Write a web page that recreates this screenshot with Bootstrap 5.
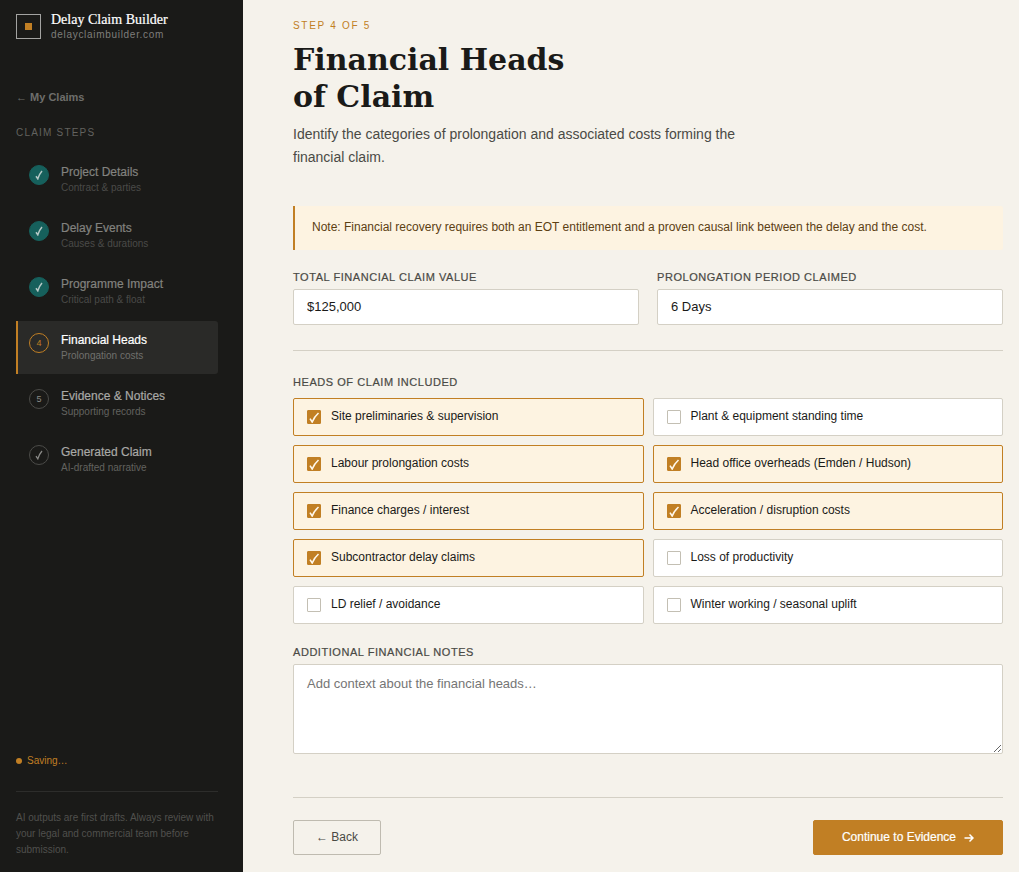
<!DOCTYPE html>
<html lang="en">
<head>
<meta charset="utf-8">
<meta name="viewport" content="width=device-width, initial-scale=1">
<title>Delay Claim Builder</title>
<link href="https://cdn.jsdelivr.net/npm/bootstrap@5.3.0/dist/css/bootstrap.min.css" rel="stylesheet">
<style>
:root { --ink:#1a1a18; --amber:#c17f24; --paper:#f5f2eb; --line:#d4d0c5; --cream:#fdf3e1; }
body { font-family:"Liberation Sans", Arial, sans-serif; font-size:12px; line-height:18px; color:var(--ink); background:var(--paper); }
.sidebar { width:243px; flex:none; background:var(--ink); padding:14px 25px 14px 16px; color:#62625f; }
.brand { gap:10px; }
.logo { width:25px; height:25px; flex:none; }
.brand-name { font:14px/12px "Liberation Serif", serif; color:#fff; -webkit-text-stroke:.2px; }
.brand-url { font-size:10px; line-height:12px; letter-spacing:.07em; color:#7e7e7b; margin-top:3px; }
.back-link { font-size:11px; line-height:16px; font-weight:bold; color:#6e6e6b; margin-top:48px; text-decoration:none; }
.side-title { font-size:10px; line-height:14px; letter-spacing:.12em; margin:21px 0 13px; color:#62625f; }
.steps { gap:3px; }
.step { border-left:2px solid transparent; border-radius:0 3px 3px 0; padding:11px; gap:12px; text-decoration:none; color:#a9a9a6; }
.step-dot { width:20px; height:20px; margin-top:1px; flex:none; border:1px solid #4b4b48; font-size:9px; color:#8a8a87; }
.step-name { line-height:16px; display:block; -webkit-text-stroke:.2px; }
.step-sub { font-size:10px; line-height:15px; display:block; color:#62625f; }
.step.done { color:#82827f; }
.step.done .step-sub { color:#4a4a48; }
.step.done .step-dot { background:#16605c; border-color:#16605c; color:#b5c8c6; }
.step.current { background:#2a2a28; border-left-color:var(--amber); color:#fff; }
.step.current .step-sub { color:#70706d; }
.step.current .step-dot { border-color:var(--amber); color:var(--amber); }
.saving { font-size:10px; line-height:14px; color:var(--amber); gap:5px; }
.saving-dot { width:6px; height:6px; background:var(--amber); }
.disclaimer { font-size:10px; line-height:16px; color:#50504d; border-top:1px solid #2d2d2b; margin-top:23px; padding-top:18px; }
main { padding:18px 16px 17px 50px; min-width:0; }
.eyebrow { font-size:10px; line-height:15px; letter-spacing:.17em; color:var(--amber); }
h1 { font:bold 30px/37px "DejaVu Serif", serif; margin:8px 0; }
.intro { font-size:14px; line-height:23px; color:#4a4a45; max-width:460px; margin-bottom:37px; }
.note { background:var(--cream); border-left:2px solid var(--amber); border-radius:0 2px 2px 0; color:#5c4013; padding:11px 17px 13px; line-height:20px; margin-bottom:19px; }
.caption { font-size:11px; line-height:16px; letter-spacing:.05em; color:#4a4a45; margin-bottom:4px; display:block; text-transform:uppercase; float:none; -webkit-text-stroke:.2px; }
.fields { display:grid; grid-template-columns:1fr 1fr; gap:18px; }
.form-control { font-size:13px; line-height:20px; padding:7px 13px; border-color:var(--line); border-radius:2px; color:var(--ink); background:#fff; }
.form-control::placeholder { color:#757575; }
.rule { border:0; border-top:1px solid var(--line); opacity:1; margin:25px 0 23px; }
.heads { display:grid; grid-template-columns:1fr 1fr; gap:9px; margin:4px 0 20px; }
.head-item { background:#fff; border:1px solid var(--line); border-radius:2px; padding:8px 12px 10px 13px; gap:10px; }
.head-item:has(:checked) { background:var(--cream); border-color:var(--amber); }
.head-item .form-check-input { width:14px; height:14px; margin:3px 0 0; flex:none; border:1px solid #c3bfb3; border-radius:1px; background-color:#fff; }
.head-item .form-check-input:checked { border-color:var(--amber); background-color:var(--amber); background-size:14px 14px; background-image:url("data:image/svg+xml,%3Csvg xmlns='http://www.w3.org/2000/svg' viewBox='0 0 14 14'%3E%3Cpath d='M3 8.6 5.2 12 Q7.500 6.500 11.500 3' fill='none' stroke='%23fff8ec' stroke-width='1.600'/%3E%3C/svg%3E"); }
textarea.form-control { line-height:22px; padding:8px 13px 14px; resize:vertical; }
.rule-foot { margin:43px 0 22px; }
.btn { font-size:12px; line-height:19px; padding:7px 22px; border-radius:2px; }
.btn-back { border-color:#bfbbb0; color:#4a4a45; }
.btn-next { background:var(--amber); border-color:var(--amber); color:#fff; padding-left:28px; padding-right:28px; gap:8px; -webkit-text-stroke:.2px; }
.btn-back:hover { border-color:var(--ink); }
.btn-next:hover { background:#a96d1b; color:#fff; }
</style>
</head>
<body>
<div class="d-flex min-vh-100">
  <aside class="sidebar d-flex flex-column">
    <div class="brand d-flex">
      <svg class="logo" viewBox="0 0 25 25" aria-hidden="true"><rect x=".5" y=".5" width="24" height="24" fill="none" stroke="#a3a3a1"/><rect x="9" y="9" width="7" height="7" fill="#c17f24"/></svg>
      <div><div class="brand-name">Delay Claim Builder</div><div class="brand-url">delayclaimbuilder.com</div></div>
    </div>
    <a href="#" class="back-link">← My Claims</a>
    <div class="side-title">CLAIM STEPS</div>
    <nav class="steps d-flex flex-column">
      <a href="#" class="step done d-flex"><span class="step-dot rounded-circle d-flex align-items-center justify-content-center"><svg width="8" height="10" viewBox="0 0 8 10"><path d="M1 6.200 2.800 8.800Q4 4.500 7 1" fill="none" stroke="currentColor" stroke-width="1.500"/></svg></span><span><span class="step-name">Project Details</span><span class="step-sub">Contract &amp; parties</span></span></a>
      <a href="#" class="step done d-flex"><span class="step-dot rounded-circle d-flex align-items-center justify-content-center"><svg width="8" height="10" viewBox="0 0 8 10"><path d="M1 6.200 2.800 8.800Q4 4.500 7 1" fill="none" stroke="currentColor" stroke-width="1.500"/></svg></span><span><span class="step-name">Delay Events</span><span class="step-sub">Causes &amp; durations</span></span></a>
      <a href="#" class="step done d-flex"><span class="step-dot rounded-circle d-flex align-items-center justify-content-center"><svg width="8" height="10" viewBox="0 0 8 10"><path d="M1 6.200 2.800 8.800Q4 4.500 7 1" fill="none" stroke="currentColor" stroke-width="1.500"/></svg></span><span><span class="step-name">Programme Impact</span><span class="step-sub">Critical path &amp; float</span></span></a>
      <a href="#" class="step current d-flex" aria-current="step"><span class="step-dot rounded-circle d-flex align-items-center justify-content-center">4</span><span><span class="step-name">Financial Heads</span><span class="step-sub">Prolongation costs</span></span></a>
      <a href="#" class="step d-flex"><span class="step-dot rounded-circle d-flex align-items-center justify-content-center">5</span><span><span class="step-name">Evidence &amp; Notices</span><span class="step-sub">Supporting records</span></span></a>
      <a href="#" class="step d-flex"><span class="step-dot rounded-circle d-flex align-items-center justify-content-center"><svg width="8" height="10" viewBox="0 0 8 10"><path d="M1 6.200 2.800 8.800Q4 4.500 7 1" fill="none" stroke="currentColor" stroke-width="1.300"/></svg></span><span><span class="step-name">Generated Claim</span><span class="step-sub">AI-drafted narrative</span></span></a>
    </nav>
    <div class="mt-auto">
      <div class="saving d-flex align-items-center"><span class="saving-dot rounded-circle"></span>Saving…</div>
      <div class="disclaimer">AI outputs are first drafts. Always review with your legal and commercial team before submission.</div>
    </div>
  </aside>
  <main class="flex-grow-1">
    <div class="eyebrow">STEP 4 OF 5</div>
    <h1>Financial Heads<br>of Claim</h1>
    <p class="intro">Identify the categories of prolongation and associated costs forming the financial claim.</p>
    <form>
      <div class="note">Note: Financial recovery requires both an EOT entitlement and a proven causal link between the delay and the cost.</div>
      <div class="fields">
        <div><label class="caption" for="value">Total financial claim value</label><input id="value" class="form-control" type="text" value="$125,000"></div>
        <div><label class="caption" for="period">Prolongation period claimed</label><input id="period" class="form-control" type="text" value="6 Days"></div>
      </div>
      <hr class="rule">
      <fieldset>
        <legend class="caption">Heads of claim included</legend>
        <div class="heads">
          <label class="head-item d-flex"><input class="form-check-input" type="checkbox" checked>Site preliminaries &amp; supervision</label>
          <label class="head-item d-flex"><input class="form-check-input" type="checkbox">Plant &amp; equipment standing time</label>
          <label class="head-item d-flex"><input class="form-check-input" type="checkbox" checked>Labour prolongation costs</label>
          <label class="head-item d-flex"><input class="form-check-input" type="checkbox" checked>Head office overheads (Emden / Hudson)</label>
          <label class="head-item d-flex"><input class="form-check-input" type="checkbox" checked>Finance charges / interest</label>
          <label class="head-item d-flex"><input class="form-check-input" type="checkbox" checked>Acceleration / disruption costs</label>
          <label class="head-item d-flex"><input class="form-check-input" type="checkbox" checked>Subcontractor delay claims</label>
          <label class="head-item d-flex"><input class="form-check-input" type="checkbox">Loss of productivity</label>
          <label class="head-item d-flex"><input class="form-check-input" type="checkbox">LD relief / avoidance</label>
          <label class="head-item d-flex"><input class="form-check-input" type="checkbox">Winter working / seasonal uplift</label>
        </div>
      </fieldset>
      <label class="caption" for="notes">Additional financial notes</label>
      <textarea id="notes" class="form-control" rows="3" placeholder="Add context about the financial heads…"></textarea>
      <hr class="rule rule-foot">
      <div class="d-flex justify-content-between">
        <button type="button" class="btn btn-back">← Back</button>
        <button type="submit" class="btn btn-next d-flex align-items-center">Continue to Evidence <svg width="10" height="10" viewBox="0 0 10 10" aria-hidden="true"><path d="M.5 5H9M5.500 1.500 9 5 5.500 8.500" fill="none" stroke="currentColor" stroke-width="1.500"/></svg></button>
      </div>
    </form>
  </main>
</div>
<script src="https://cdn.jsdelivr.net/npm/bootstrap@5.3.0/dist/js/bootstrap.bundle.min.js"></script>
</body>
</html>
